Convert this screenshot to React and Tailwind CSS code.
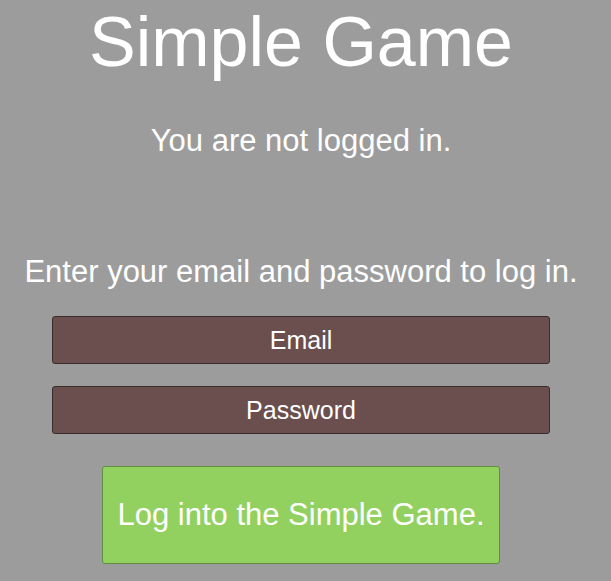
import React from 'react';

export default function App() {
  return (
    <div className="min-h-screen w-full bg-[#9c9c9c] text-white font-['Liberation_Sans',Arial,sans-serif] flex flex-col items-center pr-[9px]">
      <h1 className="text-[70px] leading-[72px] mt-[6px]">Simple Game</h1>
      <p className="text-[31px] leading-[31px] mt-[47px]">You are not logged in.</p>
      <p className="text-[31px] leading-[31px] mt-[100px]">Enter your email and password to log in.</p>
      <div className="mt-[29px] w-[498px] flex flex-col gap-[22px]">
        <input
          type="text"
          placeholder="Email"
          className="h-[48px] w-full rounded-[3px] border border-[#3a2c2c] bg-[#6b4f4f] text-center text-[25px] text-white placeholder-white outline-none"
        />
        <input
          type="password"
          placeholder="Password"
          className="h-[48px] w-full rounded-[3px] border border-[#3a2c2c] bg-[#6b4f4f] text-center text-[25px] text-white placeholder-white outline-none"
        />
      </div>
      <button className="mt-[32px] w-[398px] h-[98px] rounded-[3px] border border-[#5e8f3c] bg-[#92d160] text-[31px] text-white">
        Log into the Simple Game.
      </button>
    </div>
  );
}
